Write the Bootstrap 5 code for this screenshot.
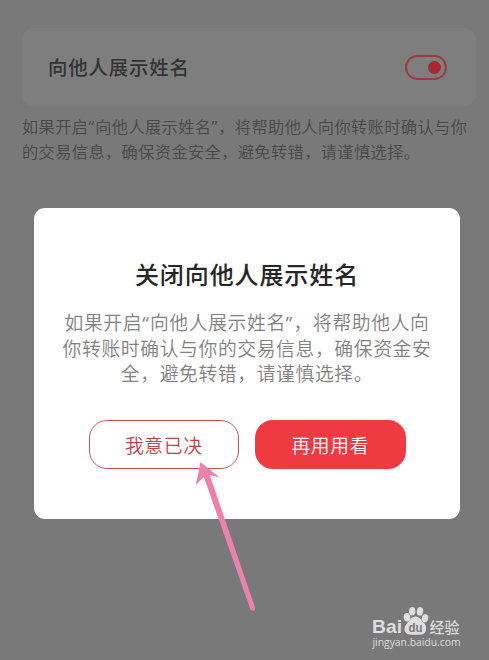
<!DOCTYPE html>
<html lang="zh-CN">
<head>
<meta charset="utf-8">
<meta name="viewport" content="width=device-width, initial-scale=1">
<title>向他人展示姓名</title>
<link href="https://cdn.jsdelivr.net/npm/bootstrap@5.3.0/dist/css/bootstrap.min.css" rel="stylesheet">
<style>
  body { width: 489px; height: 660px; background: #797979; font-family: "Open Sans", "Noto Sans CJK SC", sans-serif; }
  .setting-row { width: 454px; height: 78px; margin: 28px 0 0 22px; padding: 0 29px 0 26px; background: #7e7e7e; border-radius: 12px; }
  .setting-name { font-size: 19.4px; letter-spacing: .85px; font-weight: 500; color: #333; padding-top: 2px; }
  .hint { margin: 9px 0 0 22px; font-size: 16.2px; letter-spacing: .41px; line-height: 25.2px; font-weight: 350; color: #484848; }
  .quote { font-weight: 500; letter-spacing: 1.2px; }
  .toggle { width: 42px; height: 25px; border: 2px solid #9b3b42; border-radius: 13px; padding-right: 4px; }
  .toggle-dot { width: 13px; height: 13px; background: #a92930; }
  .dialog-box { left: 34px; top: 208px; width: 426px; height: 311px; border-radius: 11px; padding-top: 49px; }
  .dialog-title { font-size: 24px; letter-spacing: .9px; line-height: 36px; font-weight: 500; color: #262626; }
  .dialog-text { margin-top: 18px; font-size: 18.8px; letter-spacing: .63px; line-height: 25.7px; font-weight: 350; color: #828282; }
  .dialog-actions { margin-top: 32px; gap: 16px; }
  .action { width: 150.5px; height: 49px; padding: 2px 0 0; border-radius: 18px; font-size: 18.8px; letter-spacing: .65px; font-weight: 350; }
  .action-line { border: 1.5px solid #c4565c; color: #bd4349; }
  .action-fill { background: #f03a42; border: 0; color: #fff; }
  .pointer { left: 185px; top: 455px; }
  .watermark { left: 365px; top: 600px; }
</style>
<script src="https://cdn.jsdelivr.net/npm/bootstrap@5.3.0/dist/js/bootstrap.bundle.min.js"></script>
</head>
<body class="position-relative overflow-hidden d-flex flex-column">
  <main>
    <div class="setting-row d-flex align-items-center justify-content-between">
      <span class="setting-name">向他人展示姓名</span>
      <span class="toggle d-flex align-items-center justify-content-end"><span class="toggle-dot rounded-circle"></span></span>
    </div>
    <p class="hint text-nowrap mb-0">如果开启<span class="quote">“</span>向他人展示姓名<span class="quote">”</span>，将帮助他人向你转账时确认与你<br>的交易信息，确保资金安全，避免转错，请谨慎选择。</p>
  </main>

  <section class="dialog-box position-absolute bg-white text-center" role="dialog">
    <h1 class="dialog-title mb-0">关闭向他人展示姓名</h1>
    <p class="dialog-text text-nowrap mb-0">如果开启<span class="quote">“</span>向他人展示姓名<span class="quote">”</span>，将帮助他人向<br>你转账时确认与你的交易信息，确保资金安<br>全，避免转错，请谨慎选择。</p>
    <div class="dialog-actions d-flex justify-content-center">
      <button class="btn action action-line" type="button">我意已决</button>
      <button class="btn action action-fill" type="button">再用用看</button>
    </div>
  </section>

  <svg class="pointer position-absolute" width="75" height="160" viewBox="185 455 75 160">
    <path d="M200.5 462 L219.5 477.5 L209.8 475 L255.2 608 Q254.5 612.5 250.5 609.5 L203.8 477 L195.8 485 Z" fill="#ea82ab"/>
  </svg>

  <svg class="watermark position-absolute" width="105" height="55" viewBox="365 600 105 55" fill="#dedede">
    <text x="372" y="632.5" font-family="Liberation Sans, sans-serif" font-weight="700" font-size="18.5" textLength="30" lengthAdjust="spacingAndGlyphs">Bai</text>
    <ellipse cx="407" cy="617.3" rx="3.3" ry="4.2" transform="rotate(-12 407 617.3)"/>
    <ellipse cx="412.2" cy="611.2" rx="3.2" ry="4.3"/>
    <ellipse cx="420" cy="611.4" rx="3.2" ry="4.3" transform="rotate(10 420 611.4)"/>
    <ellipse cx="425" cy="618.3" rx="3.2" ry="4.1" transform="rotate(12 425 618.3)"/>
    <path d="M415.5 616.5 C420 616.5 421 620.5 424 623 C427.500 626 427 634 421.500 634.500 C418 634.800 413 634.800 409.500 634.500 C403.500 634 403.200 627 407 623.500 C410 620.500 411 616.500 415.500 616.500 Z"/>
    <text x="408.500" y="632" font-family="Liberation Sans, sans-serif" font-weight="700" font-size="12.5" fill="#777" textLength="14" lengthAdjust="spacingAndGlyphs">du</text>
    <text x="429.5" y="632.5" font-family="Noto Sans CJK SC, sans-serif" font-weight="500" font-size="15" textLength="30" lengthAdjust="spacingAndGlyphs">经验</text>
    <text x="372.5" y="646" font-family="Open Sans, sans-serif" font-size="10" font-weight="500" textLength="88" lengthAdjust="spacingAndGlyphs">jingyan.baidu.com</text>
  </svg>
</body>
</html>
